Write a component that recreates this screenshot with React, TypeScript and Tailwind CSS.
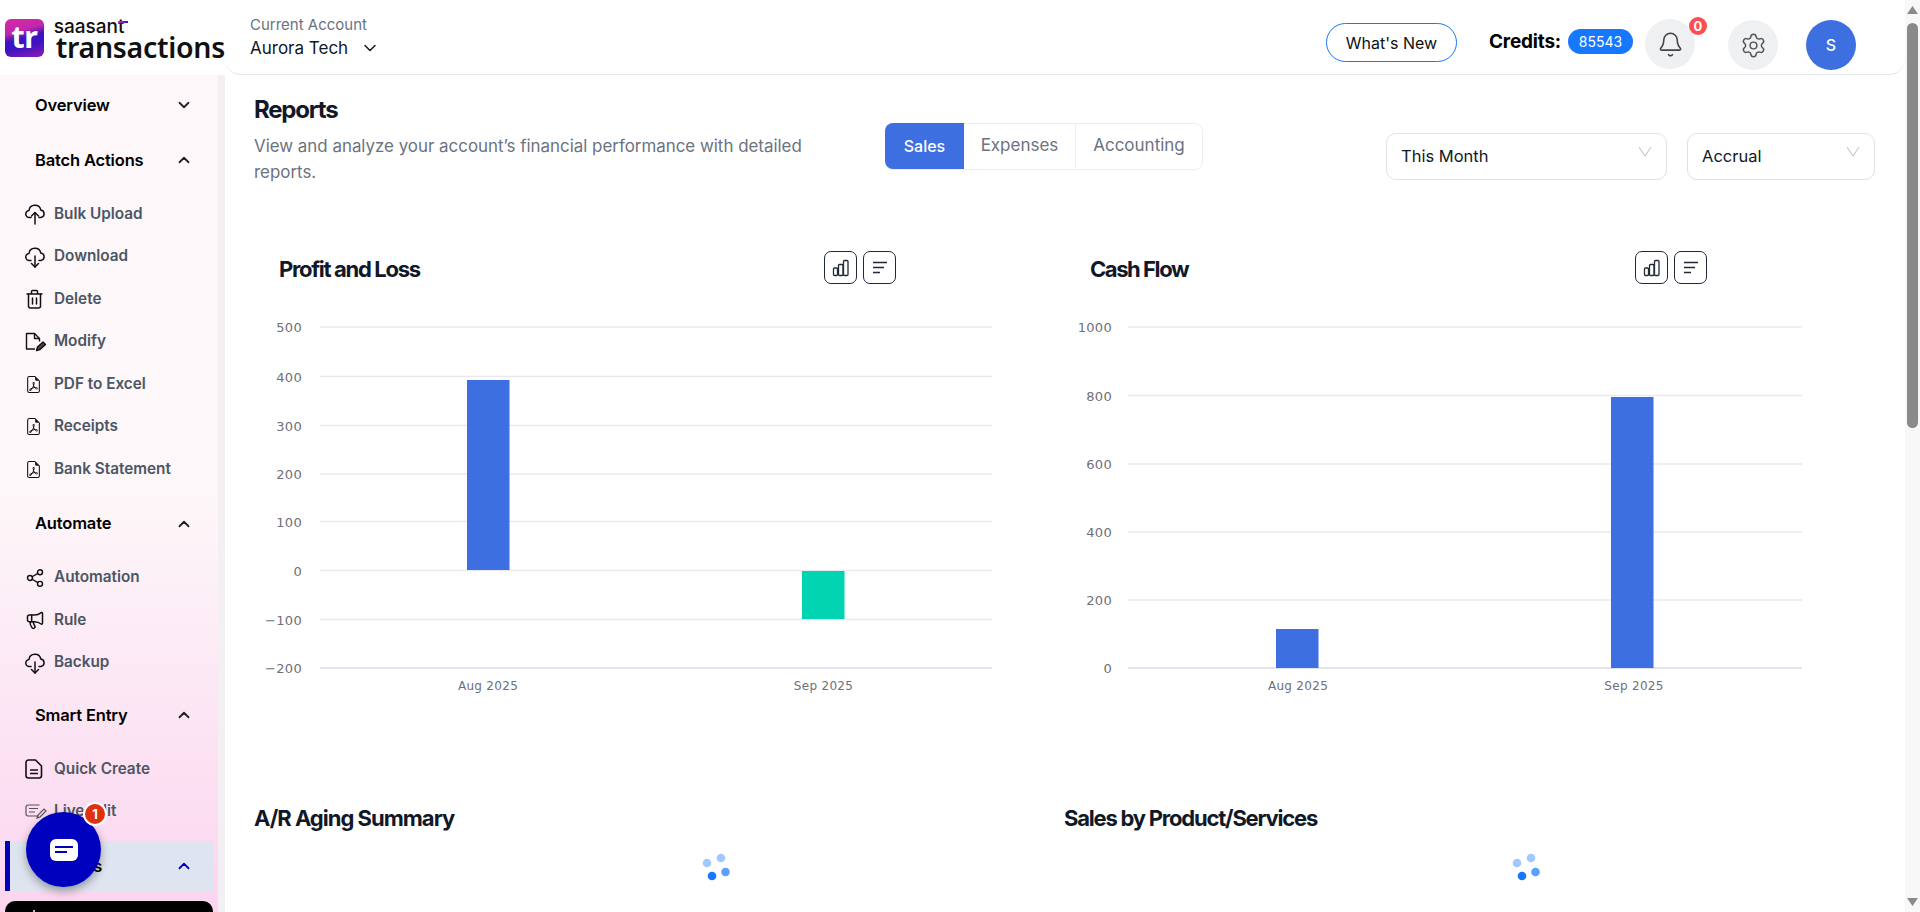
import { Bell, ChevronDown, ChevronUp, Megaphone, Settings, Share2 } from 'lucide-react'
import { BsFileEarmarkPdf } from 'react-icons/bs'
import type { ReactNode } from 'react'

const pdf = <BsFileEarmarkPdf size={17} />

const CloudIcon = ({ up }: { up?: boolean }) => (
  <svg width="20" height="22" viewBox="0 0 20 22" fill="none" stroke="#111" strokeWidth="1.5" strokeLinecap="round" strokeLinejoin="round">
    <path d="M6 14.500h-1.500a3.500 3.500 0 0 1-.5-7 6 6 0 0 1 11.800-.5 3.800 3.800 0 0 1 .2 7.500h-2" />
    <path d="M10 21v-11" />
    {up ? <path d="M6.500 13l3.500-3.500 3.500 3.500" /> : <path d="M6.500 17.500l3.500 3.500 3.500-3.500" />}
  </svg>
)

const TrashIcon = () => (
  <svg width="19" height="20" viewBox="0 0 19 20" fill="none" stroke="#111" strokeWidth="1.5" strokeLinecap="round" strokeLinejoin="round">
    <path d="M2 5h15M6.500 5v-2.500a1 1 0 0 1 1-1h4a1 1 0 0 1 1 1v2.500" />
    <path d="M3.500 5v12a2 2 0 0 0 2 2h8a2 2 0 0 0 2-2v-12M7.500 9v6M11.500 9v6" />
  </svg>
)

const ModifyIcon = () => (
  <svg width="22" height="20" viewBox="0 0 22 20" fill="none" stroke="#111" strokeWidth="1.4" strokeLinejoin="round">
    <path d="M10 17h-8.500v-15.500h8l5 5v3" />
    <path d="M9.500 1.500v5h5" />
    <path d="M11.500 18.500l1-3.500 5.500-5 2.500 2.500-5.500 5z" fill="#444" />
  </svg>
)

const QuickIcon = () => (
  <svg width="18" height="20" viewBox="0 0 18 20" fill="none" stroke="#111" strokeWidth="1.6" strokeLinejoin="round">
    <path d="M3.500 1h7l6 6v9.500a2.500 2.500 0 0 1-2.500 2.500h-10.500a2.500 2.500 0 0 1-2.500-2.500v-13a2.500 2.500 0 0 1 2.500-2.500z" />
    <path d="M5 11h8M5 14.500h8" />
  </svg>
)

const LiveIcon = () => (
  <svg width="22" height="16" viewBox="0 0 22 16" fill="none" stroke="#555" strokeWidth="1.2">
    <path d="M14 12h-11a2 2 0 0 1-2-2v-7a2 2 0 0 1 2-2h11.500" />
    <path d="M4 4.500h9M4 8h6" />
    <path d="M12 14l1-3 6-6 2 2-6 6z" />
  </svg>
)

const groups: { title: string; open: boolean; bottom: string; items: { label: string; icon: ReactNode }[] }[] = [
  { title: 'Overview', open: false, bottom: 'mb-[5px]', items: [] },
  {
    title: 'Batch Actions',
    open: true,
    bottom: 'mb-[8px]',
    items: [
      { label: 'Bulk Upload', icon: <CloudIcon up /> },
      { label: 'Download', icon: <CloudIcon /> },
      { label: 'Delete', icon: <TrashIcon /> },
      { label: 'Modify', icon: <ModifyIcon /> },
      { label: 'PDF to Excel', icon: pdf },
      { label: 'Receipts', icon: pdf },
      { label: 'Bank Statement', icon: pdf },
    ],
  },
  {
    title: 'Automate',
    open: true,
    bottom: 'mb-[6px]',
    items: [
      { label: 'Automation', icon: <Share2 size={20} strokeWidth={1.7} /> },
      { label: 'Rule', icon: <Megaphone size={20} strokeWidth={1.8} /> },
      { label: 'Backup', icon: <CloudIcon /> },
    ],
  },
  {
    title: 'Smart Entry',
    open: true,
    bottom: 'mb-[8px]',
    items: [
      { label: 'Quick Create', icon: <QuickIcon /> },
      { label: 'Live Edit', icon: <LiveIcon /> },
    ],
  },
]

const Sidebar = () => (
  <aside className="w-[225px] shrink-0 flex bg-[#f3eff3]">
    <div className="w-[218px] bg-gradient-to-b from-[#fdf7f9] from-50% to-[#fbd5ef] pt-[5px] overflow-hidden">
      {groups.map((g) => (
        <div key={g.title} className={g.bottom}>
          <div className="h-[50px] flex items-center justify-between pl-[35px] pr-[25px] text-[16.500px] font-semibold text-black tracking-[-0.01em]">
            <span>{g.title}</span>
            {g.open ? <ChevronUp size={18} strokeWidth={2.4} className="text-[#222]" /> : <ChevronDown size={18} strokeWidth={2.4} className="text-[#222]" />}
          </div>
          {g.items.length > 0 && (
            <ul className="mt-[8px]">
              {g.items.map((it) => (
                <li key={it.label} className="h-[42.5px] flex items-center text-[15.300px] font-semibold text-[#4b5563]">
                  <span className="w-[54px] pl-[25px] flex items-center text-[#111] shrink-0">{it.icon}</span>
                  {it.label}
                </li>
              ))}
            </ul>
          )}
        </div>
      ))}
      <div className="ml-[5px] w-[208px] h-[50px] bg-[#dfe5f0] border-l-[5px] border-[#0000bb] flex items-center justify-between pl-[30px] pr-[20px] text-[16.500px] font-semibold text-black">
        <span>Reports</span>
        <ChevronUp size={18} strokeWidth={2.4} className="text-[#0000bb]" />
      </div>
      <div className="ml-[5px] w-[208px] h-[50px] mt-[10px] bg-black rounded-[10px] pl-[22px] pt-[9px]">
        <svg width="14" height="6" viewBox="0 0 14 6" fill="none" stroke="#fff" strokeWidth="1.500">
          <path d="M2 3v3M7 0v6M12 3v3" />
        </svg>
      </div>
    </div>
  </aside>
)

const Header = () => (
  <header className="h-[75px] flex bg-white shrink-0">
    <div className="w-[225px] shrink-0 flex items-start pl-[5px] pt-[19px]">
      <div className="w-[39px] h-[38px] rounded-[6px] bg-[linear-gradient(165deg,#d42aa6_0%,#c426ac_32%,#3c12c2_50%,#3c12c2_66%,#8c1fb4_100%)] flex items-center justify-center text-white font-bold text-[31px] leading-none tracking-[-0.02em] font-['Open_Sans',sans-serif] pb-[4px]">
        tr
      </div>
      <div className="relative ml-[10px] mt-[1px] leading-none text-[#111]">
        <div className="text-[19px] font-medium h-[14px] font-['Inter',sans-serif] leading-[14px]">saasant</div>
        <span className="absolute left-[64px] top-[1px] w-[10px] h-[2px] bg-[linear-gradient(90deg,#d42aa6,#3c12c2)]" />
        <div className="text-[28.500px] font-semibold h-[24px] mt-[1px] pl-[2px] tracking-[-0.01em] font-['Noto_Sans',sans-serif] leading-[24px]">transactions</div>
      </div>
    </div>
    <div className="flex-1 flex items-start border-b border-[#e5e7eb] rounded-bl-[16px] rounded-br-[16px] h-[75px]">
      <div className="ml-[25px] pt-[15px]">
        <div className="text-[15px] leading-[20px] text-[#6b7280]">Current Account</div>
        <div className="flex items-center text-[17px] leading-[24px] mt-[1px] text-[#111827]">
          Aurora Tech
          <ChevronDown size={20} strokeWidth={1.8} className="ml-[12px]" />
        </div>
      </div>
      <div className="ml-auto flex items-start pr-[49px]">
        <button className="mt-[23px] w-[131px] h-[39px] rounded-full border border-[#1677ff] text-[16px] text-[#111]">What's New</button>
        <span className="ml-[32px] mt-[30px] text-[19px] leading-[24px] font-bold text-black tracking-[-0.01em]">Credits:</span>
        <span className="ml-[7px] mt-[29px] w-[65px] h-[25px] rounded-full bg-[#1677ff] text-white text-[14px] leading-[25px] text-center">85543</span>
        <div className="relative ml-[12px] mt-[19px] w-[50px] h-[50px] rounded-full bg-[#eef0f2] flex items-center justify-center text-[#444]">
          <Bell size={27} strokeWidth={1.4} />
          <span className="absolute -top-[2px] -right-[12px] w-[18px] h-[18px] rounded-full bg-[#ff4d4f] text-white text-[13px] font-bold leading-[18px] text-center">0</span>
        </div>
        <div className="ml-[33px] mt-[20px] w-[50px] h-[50px] rounded-full bg-[#eef0f2] flex items-center justify-center text-[#555]">
          <Settings size={27} strokeWidth={1.3} />
        </div>
        <div className="ml-[28px] mt-[20px] w-[50px] h-[50px] rounded-full bg-[#3d6fe0] flex items-center justify-center text-white text-[16px] font-medium">S</div>
      </div>
    </div>
  </header>
)

const Select = ({ label, width }: { label: string; width: string }) => (
  <div className={`${width} h-[47px] border border-[#dfe1e5] rounded-[10px] flex items-center justify-between pl-[14px] pr-[14px] text-[16.500px] text-[#111827]`}>
    <span>{label}</span>
    <svg width="14" height="11" viewBox="0 0 14 11" fill="none" stroke="#bdbdbd" strokeWidth="1" className="-mt-[10px]">
      <path d="M1 1l6 9 6-9" />
    </svg>
  </div>
)

const ChartButtons = () => (
  <div className="flex gap-[6px]">
    <button className="w-[33px] h-[33px] border-[1.5px] border-[#1f2937] rounded-[7px] flex items-center justify-center">
      <svg width="18" height="18" viewBox="0 0 18 18" fill="none" stroke="#1f2937" strokeWidth="1.3">
        <rect x="1.500" y="9" width="4" height="7.500" rx="1" />
        <rect x="6.500" y="5.500" width="4.500" height="11" rx="1" />
        <rect x="11.500" y="1.500" width="4.500" height="15" rx="1" />
      </svg>
    </button>
    <button className="w-[33px] h-[33px] border-[1.5px] border-[#1f2937] rounded-[7px] flex items-center justify-center">
      <svg width="18" height="16" viewBox="0 0 18 16" fill="none" stroke="#1f2937" strokeWidth="1.500">
        <path d="M2 2.500h14M2 7.500h11M2 12.500h7" />
      </svg>
    </button>
  </div>
)

type Bar = { x: number; y1: number; y2: number; fill: string }

// svg origin sits at the column's left edge, 300px down the page
const Chart = ({ left, right, ticks, labelRight, bars, months }: {
  left: number
  right: number
  ticks: { y: number; label: string }[]
  labelRight: number
  bars: Bar[]
  months: { x: number; label: string }[]
}) => (
  <svg width="780" height="400" viewBox="0 0 780 400" className="block mt-[16px]" fontFamily="'DejaVu Sans', sans-serif" fontSize="12" fill="#6e7079">
    {ticks.map((t, i) => (
      <g key={t.label}>
        <line x1={left} x2={right} y1={t.y} y2={t.y} stroke={i === ticks.length - 1 ? '#d5dbe8' : '#e8eaed'} strokeWidth="1.300" />
        <text x={labelRight} y={t.y + 5} textAnchor="end" fontSize="13" letterSpacing="0.3">{t.label}</text>
      </g>
    ))}
    {bars.map((b) => (
      <rect key={b.x} x={b.x} y={b.y1} width="42.500" height={b.y2 - b.y1} fill={b.fill} />
    ))}
    {months.map((m) => (
      <text key={m.x} x={m.x} y={390} textAnchor="middle" letterSpacing="0.3">{m.label}</text>
    ))}
  </svg>
)

const Spinner = () => (
  <svg width="28" height="28" viewBox="0 0 28 28" className="ml-[448px] mt-[20px]" fill="#1677ff">
    <circle cx="19" cy="5" r="4.300" opacity="0.4" />
    <circle cx="5" cy="10" r="4.300" opacity="0.4" />
    <circle cx="23.500" cy="19" r="4.300" opacity="0.7" />
    <circle cx="10" cy="23" r="4.300" />
  </svg>
)

const Scrollbar = () => (
  <div className="w-[15px] shrink-0 bg-[#f8f8f8] flex flex-col items-center">
    <svg width="11" height="8" viewBox="0 0 11 8" className="mt-[6px]" fill="#8a8a8a"><path d="M5.500 0l5.500 8h-11z" /></svg>
    <div className="mt-[9px] w-[11px] h-[405px] rounded-full bg-[#8a8a8a]" />
    <svg width="11" height="8" viewBox="0 0 11 8" className="mt-auto mb-[6px]" fill="#8a8a8a"><path d="M5.500 8l5.500-8h-11z" /></svg>
  </div>
)

const ChatButton = () => (
  <div className="absolute left-[26px] top-[812px] w-[75px] h-[75px] rounded-full bg-[#0000bf] shadow-[0_4px_10px_rgba(0,0,0,0.35)] flex items-center justify-center">
    <div className="w-[28px] h-[22px] rounded-[6px] bg-white flex flex-col justify-center gap-[3px] pl-[5px]">
      <div className="w-[18px] h-[2px] bg-[#0000bf]" />
      <div className="w-[12px] h-[2px] bg-[#0000bf]" />
    </div>
    <span className="absolute -top-[10px] left-[57px] w-[24px] h-[24px] rounded-full bg-[#e0310f] border-[2px] border-white text-white text-[13px] font-bold leading-[20px] text-center">1</span>
  </div>
)

export default function App() {
  return (
    <div className="relative w-[1920px] h-[912px] flex overflow-hidden bg-white font-['Inter',sans-serif]">
      <div className="flex-1 min-w-0 flex flex-col">
        <Header />
        <div className="flex flex-1 min-h-0">
          <Sidebar />
          <main className="flex-1 min-w-0 pl-[29px] pt-[20px] overflow-hidden">
            <div className="flex items-start">
              <div className="w-[631px] shrink-0">
                <h1 className="h-[30px] text-[24px] leading-[30px] font-bold text-[#111827] tracking-[-0.05em]">Reports</h1>
                <p className="mt-[8px] w-[570px] text-[16.900px] leading-[26px] text-[#6b7280]">
                  View and analyze your account’s financial performance with detailed reports.
                </p>
              </div>
              <div className="mt-[28px] w-[318px] h-[47px] flex border border-[#eceef0] rounded-[8px] text-[17px] text-[#6b7280] pb-[1px]">
                <div className="w-[79px] -ml-px -my-px bg-[#3d6fe0] text-white rounded-l-[8px] flex items-center justify-center font-medium text-[16px]">Sales</div>
                <div className="w-[112px] flex items-center justify-center border-r border-[#eceef0]">Expenses</div>
                <div className="flex-1 flex items-center justify-center">Accounting</div>
              </div>
              <div className="mt-[38px] ml-[183px] flex gap-[20px]">
                <Select label="This Month" width="w-[281px]" />
                <Select label="Accrual" width="w-[188px]" />
              </div>
            </div>

            <div className="grid grid-cols-[810px_1fr] mt-[66px]">
              <div>
                <div className="w-[642px] pl-[25px] flex items-center justify-between">
                  <h2 className="pt-[2px] text-[22px] leading-[30px] font-bold text-[#111827] tracking-[-0.06em]">Profit and Loss</h2>
                  <ChartButtons />
                </div>
                <Chart
                  left={66}
                  right={738}
                  labelRight={48}
                  ticks={[
                    { y: 27, label: '500' },
                    { y: 76.500, label: '400' },
                    { y: 125.500, label: '300' },
                    { y: 174, label: '200' },
                    { y: 221.500, label: '100' },
                    { y: 270.500, label: '0' },
                    { y: 319.500, label: '−100' },
                    { y: 368, label: '−200' },
                  ]}
                  bars={[
                    { x: 213, y1: 80, y2: 270, fill: '#3d6fe0' },
                    { x: 548, y1: 271, y2: 319, fill: '#00d4b1' },
                  ]}
                  months={[
                    { x: 234, label: 'Aug 2025' },
                    { x: 569.500, label: 'Sep 2025' },
                  ]}
                />
                <h2 className="mt-[103px] text-[22px] leading-[30px] font-bold text-[#111827] tracking-[-0.045em]">A/R Aging Summary</h2>
                <Spinner />
              </div>
              <div>
                <div className="w-[643px] pl-[26px] flex items-center justify-between">
                  <h2 className="pt-[2px] text-[22px] leading-[30px] font-bold text-[#111827] tracking-[-0.065em]">Cash Flow</h2>
                  <ChartButtons />
                </div>
                <Chart
                  left={64}
                  right={738}
                  labelRight={48}
                  ticks={[
                    { y: 27, label: '1000' },
                    { y: 95.500, label: '800' },
                    { y: 164, label: '600' },
                    { y: 232, label: '400' },
                    { y: 300, label: '200' },
                    { y: 368, label: '0' },
                  ]}
                  bars={[
                    { x: 212, y1: 329, y2: 368, fill: '#3d6fe0' },
                    { x: 547, y1: 97, y2: 368, fill: '#3d6fe0' },
                  ]}
                  months={[
                    { x: 234, label: 'Aug 2025' },
                    { x: 570, label: 'Sep 2025' },
                  ]}
                />
                <h2 className="mt-[103px] text-[22px] leading-[30px] font-bold text-[#111827] tracking-[-0.055em]">Sales by Product/Services</h2>
                <Spinner />
              </div>
            </div>
          </main>
        </div>
      </div>
      <Scrollbar />
      <ChatButton />
    </div>
  )
}
